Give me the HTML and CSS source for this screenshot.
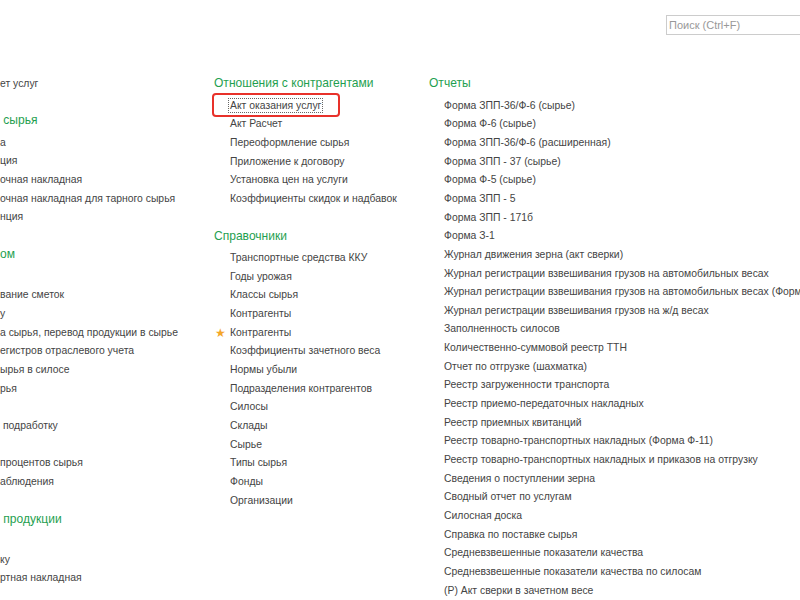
FILE: index.html
```html
<!DOCTYPE html>
<html lang="ru">

<head>
    <meta charset="UTF-8">
    <meta name="viewport" content="width=device-width, initial-scale=1.0">
    <title>Функции раздела</title>
    <link rel="stylesheet" href="styles.css">
</head>

<body>
    <div class="topbar">
        <input type="text" class="search" placeholder="Поиск (Ctrl+F)">
    </div>

    <div class="menu">
        <!-- left column is scrolled out of view -->
        <div class="column column-first">
            <div class="group">
                <div class="item">ет услуг</div>
            </div>
            <div class="group">
                <div class="group-title">&nbsp;сырья</div>
                <div class="item">а</div>
                <div class="item">ция</div>
                <div class="item">очная накладная</div>
                <div class="item">очная накладная для тарного сырья</div>
                <div class="item">нция</div>
            </div>
            <div class="group">
                <div class="group-title">ом</div>
                <div class="item">&nbsp;</div>
                <div class="item">вание сметок</div>
                <div class="item">у</div>
                <div class="item">а сырья, перевод продукции в сырье</div>
                <div class="item">егистров отраслевого учета</div>
                <div class="item">ырья в силосе</div>
                <div class="item">рья</div>
                <div class="item">&nbsp;</div>
                <div class="item">&nbsp;подработку</div>
                <div class="item">&nbsp;</div>
                <div class="item">процентов сырья</div>
                <div class="item">аблюдения</div>
            </div>
            <div class="group">
                <div class="group-title">&nbsp;продукции</div>
                <div class="item">&nbsp;</div>
                <div class="item">ку</div>
                <div class="item">ртная накладная</div>
            </div>
        </div>

        <div class="column column-second">
            <div class="group">
                <div class="group-title">Отношения с контрагентами</div>
                <div class="item item-marked"><span class="focused">Акт оказания услуг</span></div>
                <div class="item">Акт Расчет</div>
                <div class="item">Переоформление сырья</div>
                <div class="item">Приложение к договору</div>
                <div class="item">Установка цен на услуги</div>
                <div class="item">Коэффициенты скидок и надбавок</div>
            </div>
            <div class="group">
                <div class="group-title">Справочники</div>
                <div class="item">Транспортные средства ККУ</div>
                <div class="item">Годы урожая</div>
                <div class="item">Классы сырья</div>
                <div class="item">Контрагенты</div>
                <div class="item item-favorite">Контрагенты</div>
                <div class="item">Коэффициенты зачетного веса</div>
                <div class="item">Нормы убыли</div>
                <div class="item">Подразделения контрагентов</div>
                <div class="item">Силосы</div>
                <div class="item">Склады</div>
                <div class="item">Сырье</div>
                <div class="item">Типы сырья</div>
                <div class="item">Фонды</div>
                <div class="item">Организации</div>
            </div>
        </div>

        <div class="column column-third">
            <div class="group">
                <div class="group-title">Отчеты</div>
                <div class="item">Форма ЗПП-36/Ф-6 (сырье)</div>
                <div class="item">Форма Ф-6 (сырье)</div>
                <div class="item">Форма ЗПП-36/Ф-6 (расширенная)</div>
                <div class="item">Форма ЗПП - 37 (сырье)</div>
                <div class="item">Форма Ф-5 (сырье)</div>
                <div class="item">Форма ЗПП - 5</div>
                <div class="item">Форма ЗПП - 171б</div>
                <div class="item">Форма З-1</div>
                <div class="item">Журнал движения зерна (акт сверки)</div>
                <div class="item">Журнал регистрации взвешивания грузов на автомобильных весах</div>
                <div class="item">Журнал регистрации взвешивания грузов на автомобильных весах (Форма СП-1)</div>
                <div class="item">Журнал регистрации взвешивания грузов на ж/д весах</div>
                <div class="item">Заполненность силосов</div>
                <div class="item">Количественно-суммовой реестр ТТН</div>
                <div class="item">Отчет по отгрузке (шахматка)</div>
                <div class="item">Реестр загруженности транспорта</div>
                <div class="item">Реестр приемо-передаточных накладных</div>
                <div class="item">Реестр приемных квитанций</div>
                <div class="item">Реестр товарно-транспортных накладных (Форма Ф-11)</div>
                <div class="item">Реестр товарно-транспортных накладных и приказов на отгрузку</div>
                <div class="item">Сведения о поступлении зерна</div>
                <div class="item">Сводный отчет по услугам</div>
                <div class="item">Силосная доска</div>
                <div class="item">Справка по поставке сырья</div>
                <div class="item">Средневзвешенные показатели качества</div>
                <div class="item">Средневзвешенные показатели качества по силосам</div>
                <div class="item">(Р) Акт сверки в зачетном весе</div>
            </div>
        </div>
    </div>
</body>
</html>
```

FILE: styles.css
```css
body {
    margin: 0;
    height: 600px;
    overflow: hidden;
    background: #fff;
    font-family: "Liberation Sans", Arial, sans-serif;
    color: #444;
}

.topbar {
    display: flex;
    justify-content: flex-end;
    height: 50px;
    box-sizing: border-box;
    padding-top: 15px;
}

.search {
    width: 174px;
    height: 20px;
    margin-right: -40px;
    box-sizing: border-box;
    padding: 0 2px;
    border: 1px solid #ccc;
    font-family: "Liberation Sans", Arial, sans-serif;
    font-size: 11px;
    color: #444;
    outline: none;
}

.search::placeholder {
    color: #999;
}

.menu {
    display: flex;
    padding-top: 23px;
}

.column {
    flex: none;
    white-space: nowrap;
}

.column-first {
    width: 214px;
    padding-top: 1.5px;
}

.column-second {
    width: 215px;
}

.column-third .item {
    padding-left: 15px;
}

.group + .group {
    margin-top: 17px;
}

.group-title {
    font-size: 12.05px;
    line-height: 20px;
    color: #1f9f50;
    margin-bottom: 3.6px;
}

.item {
    position: relative;
    font-size: 10.4px;
    line-height: 18.65px;
    padding-left: 16px;
}

.column-first .item {
    padding-left: 0;
}

.focused {
    outline: 1px dotted #666;
    outline-offset: 1px;
}

/* red annotation frame drawn over the selected command */
.item-marked::after {
    content: "";
    position: absolute;
    left: -2px;
    top: -3.4px;
    width: 128px;
    height: 24px;
    box-sizing: border-box;
    border: 2.5px solid #e8312a;
    border-radius: 4px;
}

.item-favorite::before {
    content: "\2605";
    position: absolute;
    left: 1px;
    top: 0;
    font-size: 12px;
    color: #f4a62a;
}
```
